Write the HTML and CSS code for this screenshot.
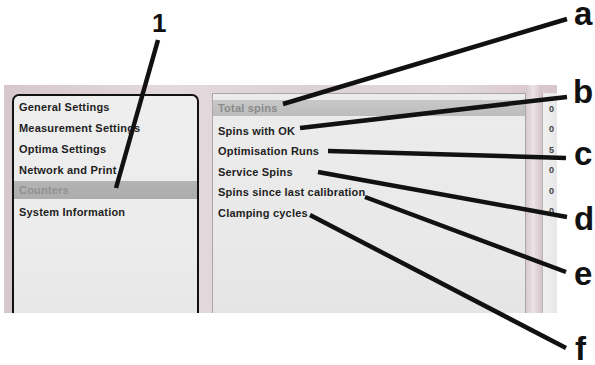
FILE: index.html
```html
<!DOCTYPE html>
<html>
<head>
<meta charset="utf-8">
<link rel="stylesheet" href="styles.css">
</head>
<body>
<div class="page">
  <div class="shot">
    <div class="menu">
      <div class="row">General Settings</div>
      <div class="row">Measurement Settings</div>
      <div class="row">Optima Settings</div>
      <div class="row">Network and Print</div>
      <div class="row sel">Counters</div>
      <div class="row">System Information</div>
    </div>
    <div class="list">
      <div class="row sel">Total spins</div>
      <div class="row">Spins with OK</div>
      <div class="row">Optimisation Runs</div>
      <div class="row">Service Spins</div>
      <div class="row">Spins since last calibration</div>
      <div class="row">Clamping cycles</div>
    </div>
    <div class="gap"></div>
    <div class="values">
      <div class="val">0</div>
      <div class="val">0</div>
      <div class="val">5</div>
      <div class="val">0</div>
      <div class="val">0</div>
      <div class="val">0</div>
    </div>
  </div>
  <svg class="callouts" width="595" height="365" viewBox="0 0 595 365">
    <g stroke="#111" stroke-width="4.5" fill="none">
      <line x1="158" y1="40" x2="116" y2="188"/>
      <line x1="283" y1="104" x2="567" y2="19"/>
      <line x1="300" y1="128" x2="567" y2="97"/>
      <line x1="328" y1="151" x2="566" y2="158"/>
      <line x1="318" y1="172" x2="567" y2="217"/>
      <line x1="365" y1="197" x2="566" y2="272"/>
      <line x1="310" y1="215" x2="566" y2="348"/>
    </g>
  </svg>
  <div class="lbl num" style="left:152px;top:13px">1</div>
  <div class="lbl" style="left:574px;top:2px">a</div>
  <div class="lbl" style="left:573px;top:80px">b</div>
  <div class="lbl" style="left:574px;top:142px">c</div>
  <div class="lbl" style="left:574px;top:207px">d</div>
  <div class="lbl" style="left:574px;top:262px">e</div>
  <div class="lbl" style="left:575px;top:337px">f</div>
</div>
</body>
</html>
```
FILE: styles.css
```css
html, body {
  margin: 0;
  padding: 0;
  background: #ffffff;
}
.page {
  position: relative;
  width: 595px;
  height: 365px;
  overflow: hidden;
}
.shot {
  margin: 85px 0 0 4px;
  width: 553px;
  height: 228px;
  display: flex;
  align-items: flex-start;
  padding: 9px 0 0 8px;
  box-sizing: border-box;
  overflow: hidden;
  background: linear-gradient(90deg, #d6c7cb 0%, #e4dade 30%, #dcd2d5 55%, #e2d8db 80%, #d8c6cb 100%);
  font-family: "Liberation Sans", Arial, sans-serif;
  font-weight: bold;
  font-size: 11px;
  letter-spacing: 0.2px;
  color: #1e1e1e;
}
.menu {
  flex: 0 0 187px;
  height: 240px;
  box-sizing: border-box;
  border: 2px solid #111;
  border-bottom: none;
  border-radius: 7px 7px 0 0;
  background: linear-gradient(180deg, #eeeeee 0%, #ececec 60%, #e6e6e6 100%);
  padding-top: 1px;
}
.row {
  height: 21px;
  line-height: 21px;
  padding-left: 5px;
  white-space: nowrap;
}
.menu .row.sel {
  background: linear-gradient(180deg, #b4b4b4 0%, #acacac 100%);
  color: #909090;
  height: 18px;
  line-height: 19px;
  margin-bottom: 3px;
}
.list {
  flex: 0 0 314px;
  margin-left: 13px;
  margin-top: -1px;
  height: 240px;
  box-sizing: border-box;
  border: 1px solid #a9a6a7;
  border-bottom: none;
  background: linear-gradient(180deg, #ececec 0%, #e9e9e9 60%, #e4e4e4 100%);
  padding-top: 6px;
}
.list .row {
  height: 20.6px;
  line-height: 20px;
  padding-left: 5px;
}
.list .row.sel {
  height: 16px;
  line-height: 17px;
  margin-bottom: 4.6px;
  background: linear-gradient(180deg, #c8c8c8 0%, #bcbcbc 100%);
  color: #8a8a8a;
}
.gap {
  flex: 0 0 16px;
  align-self: stretch;
  margin-top: -9px;
  background: linear-gradient(90deg, #d8c9cd 0%, #ece4e7 45%, #d3c2c7 100%);
}
.values {
  flex: 0 0 20px;
  margin-top: -1px;
  height: 240px;
  box-sizing: border-box;
  border-left: 1px solid #b8b3b5;
  background: linear-gradient(90deg, #f0f0f0 0%, #e4e4e4 100%);
  padding-top: 7px;
  font-size: 9px;
  color: #444;
}
.val {
  height: 20.4px;
  line-height: 18px;
  padding-left: 6px;
}
.callouts {
  position: absolute;
  left: 0;
  top: 0;
  pointer-events: none;
}
.lbl {
  position: absolute;
  font-family: "Liberation Sans", Arial, sans-serif;
  font-weight: bold;
  font-size: 33px;
  line-height: 24px;
  color: #111;
}
.lbl.num {
  font-size: 26px;
  line-height: 20px;
}
```
